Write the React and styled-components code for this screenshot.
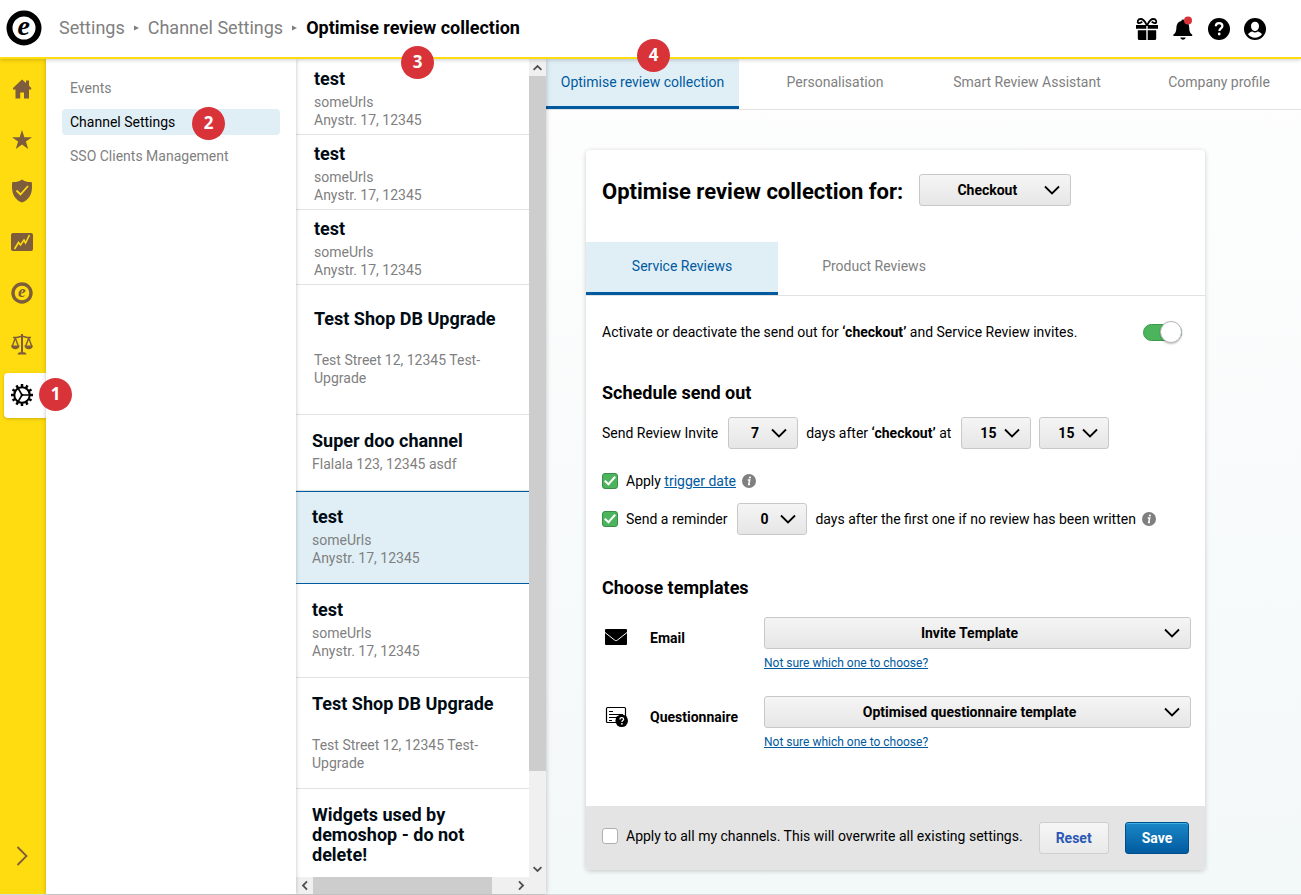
import React, { useState } from "react";
import styled, { createGlobalStyle, css } from "styled-components";

const colors = {
	yellow: "#ffdc0f",
	brown: "#7d5d3b",
	blue: "#005aa0",
	lightBlue: "#e0eff6",
	grey: "#7f7f7f",
	line: "#e2e2e2",
	red: "#d9333a",
	green: "#4cb45c",
};

const GlobalStyle = createGlobalStyle`
	*, *::before, *::after {
		box-sizing: border-box;
	}
	body {
		margin: 0;
		background: #fff;
		color: #000;
		font-family: Roboto, "Liberation Sans", sans-serif;
		font-size: 14px;
		line-height: 18px;
	}
	button, input, select {
		font: inherit;
		color: inherit;
		margin: 0;
	}
	h1, h2, h3, p, ul {
		margin: 0;
		padding: 0;
	}
	ul {
		list-style: none;
	}
	a {
		color: inherit;
		text-decoration: none;
	}
	svg {
		display: block;
		flex: none;
		overflow: visible;
	}
`;

const Shell = styled.div`
	position: relative;
	display: flex;
	flex-direction: column;
	height: 100vh;
	border-bottom: 1px solid #d8d8d8;
`;

const StyledHeader = styled.header`
	position: relative;
	z-index: 3;
	display: flex;
	align-items: center;
	flex: none;
	height: 59px;
	padding: 0 35px 2px 6px;
	background: #fff;
	border-bottom: 2px solid ${colors.yellow};
	box-shadow: 0 1px 4px rgba(0, 0, 0, 0.2);
`;

const Breadcrumb = styled.nav`
	display: flex;
	align-items: center;
	flex: 1;
	gap: 9px;
	margin-left: 17px;
	font-size: 18px;
	line-height: 24px;
	color: ${colors.grey};

	strong {
		font-weight: 700;
		color: #000;
	}
`;

const HeaderActions = styled.div`
	display: flex;
	align-items: center;
	gap: 14px;
	padding-top: 2px;
`;

const IconButton = styled.button`
	padding: 0;
	border: 0;
	background: none;
	cursor: pointer;
`;

const Columns = styled.div`
	display: flex;
	flex: 1;
	min-height: 0;
`;

const Rail = styled.nav`
	display: flex;
	flex-direction: column;
	justify-content: space-between;
	flex: none;
	width: 46px;
	padding: 5px 0 28px 4px;
	background: ${colors.yellow};
	color: ${colors.brown};
`;

const RailItem = styled.li`
	display: flex;
	align-items: center;
	height: 51px;

	a {
		display: flex;
		align-items: center;
		width: 100%;
		height: 45px;
		padding: 0 0 2px 7px;
		border-radius: 4px 0 0 4px;
		${({ $active }) =>
			$active &&
			css`
				background: #fff;
				color: #000;
				box-shadow: 0 1px 3px rgba(0, 0, 0, 0.2);
			`}
	}
`;

const ExpandButton = styled(IconButton)`
	margin-left: 12px;
	align-self: flex-start;
	color: ${colors.brown};
`;

const SubMenu = styled.nav`
	position: relative;
	z-index: 1;
	flex: none;
	width: 250px;
	padding: 16px;
	background: #fff;
	box-shadow: 0 0 4px rgba(0, 0, 0, 0.25);

	ul {
		display: flex;
		flex-direction: column;
		gap: 8px;
	}
`;

const SubMenuLink = styled.a`
	display: block;
	padding: 0 8px;
	line-height: 26px;
	border-radius: 4px;
	color: ${({ $active }) => ($active ? "#000" : colors.grey)};
	background: ${({ $active }) => ($active ? colors.lightBlue : "none")};
`;

const ChannelPane = styled.section`
	display: grid;
	grid-template-columns: 1fr 17px;
	grid-template-rows: minmax(0, 1fr) 17px;
	flex: none;
	position: relative;
	width: 250px;
	background: #fff;
	box-shadow: 0 0 5px rgba(0, 0, 0, 0.25);
`;

const ChannelList = styled.ul`
	overflow: hidden;
	padding-top: 1px;
`;

const channelSpacing = {
	tight: "9px 18px 5px",
	tall: "24px 18px 27px",
	normal: "16px 16px 17px",
	even: "16px",
};

const ChannelItem = styled.li`
	padding: ${({ $spacing }) => channelSpacing[$spacing]};
	border-bottom: 1px solid ${colors.line};
	color: ${colors.grey};
	cursor: pointer;

	h3 {
		margin-bottom: ${({ $wide }) => ($wide ? "22px" : "4px")};
		font-size: 18px;
		line-height: 20px;
		font-weight: 700;
		color: #000b14;
	}

	${({ $selected }) =>
		$selected &&
		css`
			padding: 15px 16px 16px;
			border-top: 1px solid ${colors.blue};
			border-bottom-color: ${colors.blue};
			background: ${colors.lightBlue};
		`}
`;

const ScrollTrack = styled.div`
	display: flex;
	flex-direction: ${({ $vertical }) => ($vertical ? "column" : "row")};
	background: #f0f0f0;
	color: #505050;
`;

const ScrollArrow = styled.button`
	display: flex;
	align-items: center;
	justify-content: center;
	flex: none;
	width: 17px;
	height: 17px;
	padding: 0;
	border: 0;
	background: none;
`;

const ScrollThumb = styled.div`
	flex: ${({ $share }) => $share};
	background: #cdcdcd;
`;

const ScrollRest = styled.div`
	flex: ${({ $share }) => $share};
`;

const ScrollCorner = styled.div`
	background: #f0f0f0;
`;

const Main = styled.main`
	flex: 1;
	min-width: 0;
	overflow: hidden auto;
	background: linear-gradient(#fefefe, #f3f8f9);
`;

const TabBar = styled.nav`
	display: flex;
	overflow: hidden;
	background: #fff;
	border-bottom: 1px solid ${colors.line};
`;

const Tab = styled.a`
	display: flex;
	align-items: center;
	justify-content: center;
	flex: none;
	width: 192px;
	height: 50px;
	padding: 0 0 2px;
	border: 0;
	border-bottom: 3px solid transparent;
	background: none;
	color: ${colors.grey};
	white-space: nowrap;
	cursor: pointer;

	${({ $active }) =>
		$active &&
		css`
			color: ${colors.blue};
			background: ${colors.lightBlue};
			border-bottom-color: ${colors.blue};
		`}
`;

const PageTab = styled(Tab)`
	&:first-child {
		width: 193px;
	}
`;

const CardTab = styled(Tab)`
	height: 53px;
`;

const Card = styled.form`
	max-width: 619px;
	margin: 40px 40px 24px;
	border-radius: 4px;
	background: #fff;
	box-shadow: 0 1px 5px rgba(0, 0, 0, 0.2);
`;

const CardHead = styled.div`
	display: flex;
	align-items: flex-start;
	gap: 16px;
	padding: 24px 16px 32px;

	h1 {
		font-size: 22px;
		line-height: 36px;
		font-weight: 700;
	}
`;

const CardBody = styled.div`
	padding: 24px 14px 56px 16px;
`;

const Row = styled.div`
	display: flex;
	align-items: center;
	min-height: 20px;
`;

const ToggleRow = styled(Row)`
	justify-content: space-between;
	min-height: 24px;
	padding-right: 9px;
`;

const SectionTitle = styled.h2`
	margin: 37px 0 ${({ $gap }) => $gap}px;
	font-size: 18px;
	line-height: 24px;
	font-weight: 700;
`;

const RowText = styled.label`
	padding: 0 10px 0 ${({ $after }) => ($after ? "8px" : "0")};
	white-space: nowrap;

	b {
		font-weight: 700;
	}

	& + svg {
		margin-left: -4px;
	}
`;

const Options = styled.div`
	display: flex;
	flex-direction: column;
	gap: 12px;
	margin: 22px 0 41px;

	& + ${SectionTitle} {
		margin-top: 0;
	}
`;

const TextLink = styled.a`
	color: ${colors.blue};
	text-decoration: underline;
`;

const SelectBox = styled.div`
	display: grid;
	align-items: center;
	flex: none;
	width: ${({ $width }) => $width || "100%"};

	& + & {
		margin-left: 8px;
	}

	select {
		grid-area: 1 / 1;
		appearance: none;
		width: 100%;
		height: 32px;
		padding: 0 24px 0 8px;
		border: 1px solid #c8c8c8;
		border-radius: 3px;
		background: linear-gradient(#f5f5f5, #e6e6e6);
		font-weight: 700;
		text-align-last: center;
		cursor: pointer;
	}

	svg {
		grid-area: 1 / 1;
		justify-self: end;
		margin-right: 11px;
		pointer-events: none;
	}
`;

const Checkbox = styled.input`
	appearance: none;
	flex: none;
	display: grid;
	place-items: center;
	width: 16px;
	height: 16px;
	margin-right: 8px;
	border: 1px solid #b0b0b0;
	border-radius: 3px;
	background: #fff;
	cursor: pointer;

	&:checked {
		border-color: #3a8f48;
		background: ${colors.green};
	}

	&:checked::after {
		content: "";
		width: 6px;
		height: 11px;
		margin-bottom: 3px;
		border: solid #fff;
		border-width: 0 2px 2px 0;
		transform: rotate(42deg);
	}
`;

const Toggle = styled.input`
	appearance: none;
	flex: none;
	display: flex;
	align-items: center;
	width: 39px;
	height: 17px;
	border: 1px solid #b0b0b0;
	border-radius: 9px;
	background: #ddd;
	cursor: pointer;

	&::after {
		content: "";
		flex: none;
		width: 22px;
		height: 22px;
		margin-left: -1px;
		border: 1px solid #b8b8b8;
		border-radius: 50%;
		background: #fff;
		box-shadow: 0 1px 2px rgba(0, 0, 0, 0.25);
	}

	&:checked {
		border-color: #3a9a4a;
		background: ${colors.green};
	}

	&:checked::after {
		margin-left: 16px;
	}
`;

const Templates = styled.div`
	display: flex;
	flex-direction: column;
	gap: 25px;
`;

const TemplateRow = styled.div`
	display: grid;
	grid-template-columns: 48px 114px 1fr;

	> svg {
		margin: 8px 0 0 3px;
	}

	label {
		line-height: 42px;
		font-weight: 700;
	}

	a {
		display: inline-block;
		margin-top: 6px;
		font-size: 12px;
		line-height: 16px;
	}
`;

const CardFooter = styled.footer`
	display: flex;
	align-items: flex-start;
	gap: 16px;
	padding: 16px;
	border-radius: 0 0 4px 4px;
	background: #e4e4e4;

	label {
		display: flex;
		align-items: center;
		flex: 1;
		height: 28px;
		white-space: nowrap;
	}
`;

const FooterButton = styled.button`
	height: 32px;
	padding: 0 16px;
	border: 1px solid ${({ $primary }) => ($primary ? "#004f8c" : "#cfcfcf")};
	border-radius: 3px;
	background: ${({ $primary }) =>
		$primary
			? "linear-gradient(#1b87c6, #005aa0)"
			: "linear-gradient(#f6f6f6, #e9e9e9)"};
	box-shadow: ${({ $primary }) =>
		$primary ? "inset 0 1px 0 #3fb0e4" : "none"};
	color: ${({ $primary }) => ($primary ? "#fff" : "#2b59b5")};
	font-weight: 700;
	cursor: pointer;
`;

const Badge = styled.span`
	position: absolute;
	z-index: 4;
	top: ${({ $top }) => $top}px;
	left: ${({ $left }) => $left}px;
	width: 33px;
	height: 33px;
	border-radius: 50%;
	background: ${colors.red};
	color: #fff;
	font: 700 17px/32px "Open Sans", sans-serif;
	text-align: center;
`;

const LogoMark = ({ size, ring }) => (
	<svg width={size} height={size} viewBox="0 0 36 36" aria-hidden="true">
		<circle
			cx="18"
			cy="18"
			r={17.5 - ring / 2}
			fill="none"
			stroke="currentColor"
			strokeWidth={ring}
		/>
		<text
			x="17.6"
			y="24.6"
			textAnchor="middle"
			fontFamily="'Liberation Serif', serif"
			fontStyle="italic"
			fontWeight="700"
			fontSize="28"
			fill="currentColor"
		>
			e
		</text>
	</svg>
);

const HomeIcon = () => (
	<svg width="22" height="22" viewBox="0 0 22 22" fill="currentColor">
		<path d="M11 1.5 15 5V2.5h3v5.3l2.2 2.1v1.6H18V20.500h-5v-6H9.200v6H4.500v-9H2V9.900z" />
	</svg>
);

const StarIcon = () => (
	<svg width="22" height="22" viewBox="0 0 22 22" fill="currentColor">
		<path d="M11 1l2.400 7.200H21l-6.100 4.400 2.300 7.400L11 15.500 4.800 20l2.300-7.400L1 8.200h7.600z" />
	</svg>
);

const ShieldIcon = () => (
	<svg width="22" height="24" viewBox="0 0 22 24">
		<path
			d="M11 .5c2.600 2 5.800 2.700 9.500 2.600.5.800.5 2.400.5 4.900 0 8-3.500 13-10 15.500C4.500 21 1 16 1 8c0-2.500 0-4.100.5-4.900C5.200 3.200 8.400 2.500 11 .5z"
			fill="currentColor"
		/>
		<path
			d="M5.500 11.500l4 4 7.500-8.500"
			fill="none"
			stroke={colors.yellow}
			strokeWidth="1.800"
		/>
	</svg>
);

const ChartIcon = () => (
	<svg width="22" height="18" viewBox="0 0 22 18">
		<rect width="22" height="18" rx="2" fill="currentColor" />
		<path
			d="M3.500 16 7.500 9.500l2 2.500 3.500-5 1.500 3L18.500 2"
			fill="none"
			stroke={colors.yellow}
			strokeWidth="1.600"
		/>
	</svg>
);

const ScalesIcon = () => (
	<svg
		width="22"
		height="22"
		viewBox="0 0 22 22"
		fill="none"
		stroke="currentColor"
		strokeWidth="1.400"
	>
		<path d="M11 1v18" strokeWidth="2" />
		<path d="M2 4.500h3.500C8 4.500 9 3.200 11 3.200s3 1.300 5.500 1.300H20" strokeWidth="1.600" />
		<path d="M4.300 5 1.300 13M4.300 5l3 8M17.700 5l-3 8M17.700 5l3 8" />
		<path
			d="M0 12.500h8.600c-.3 2.500-2 3.800-4.300 3.800S.3 15 0 12.500zM13.400 12.500H22c-.3 2.500-2 3.800-4.300 3.800s-4-1.300-4.300-3.800zM6.500 21.500c0-1.700 2-2.500 4.500-2.500s4.500.8 4.500 2.500z"
			fill="currentColor"
			stroke="none"
		/>
	</svg>
);

const GearIcon = () => (
	<svg
		width="22"
		height="22"
		viewBox="0 0 22 22"
		fill="none"
		stroke="currentColor"
	>
		<circle cx="11" cy="11" r="7.700" strokeWidth="2" />
		<g strokeWidth="2.500">
			{[...Array(12)].map((_, idx) => (
				<path
					key={idx}
					d="M11 0v3"
					transform={`rotate(${idx * 30} 11 11)`}
				/>
			))}
		</g>
		<path d="M18 11h-7L7.500 5M11 11l-3.500 6" strokeWidth="1.600" />
		<circle cx="11" cy="11" r="1.300" fill="currentColor" stroke="none" />
	</svg>
);

const GiftIcon = () => (
	<svg width="22" height="22" viewBox="0 0 22 22" fill="currentColor">
		<path d="M0 7h10.300v3.800H0zM11.700 7H22v3.800H11.700zM1.800 12.200h8.500V22H3.300a1.500 1.500 0 0 1-1.500-1.500zM11.700 12.200h8.500v8.300a1.500 1.500 0 0 1-1.500 1.500h-7z" />
		<path d="M9.800 6h2.400v2H9.800z" />
		<path
			d="M10.400 6.300C9 3.500 7.300 1 4.700 1 1.500 1 1 4.300 2.600 5.100c1.200.5 2.300-.5 3.700-1.300M11.600 6.300C13 3.500 14.700 1 17.300 1c3.200 0 3.700 3.300 2.100 4.100-1.200.5-2.300-.5-3.700-1.300"
			fill="none"
			stroke="currentColor"
			strokeWidth="1.800"
		/>
	</svg>
);

const BellIcon = () => (
	<svg width="22" height="24" viewBox="0 0 22 24">
		<path
			d="M11 2.500a1.600 1.600 0 0 1 1.600 1.400C16 4.600 17.100 7.200 17.200 10.300c.1 4.300.9 5.800 3 7.300V19H1.400v-1.400c2.100-1.500 2.900-3 3-7.300C4.500 7.200 6 4.600 9.400 3.900A1.600 1.600 0 0 1 11 2.500zM8.300 20.500h5.400c-.3 1.400-1.300 2.200-2.700 2.200s-2.400-.8-2.700-2.200z"
			fill="currentColor"
		/>
		<circle cx="16" cy="3.500" r="4" fill={colors.red} />
	</svg>
);

const HelpIcon = () => (
	<svg width="22" height="22" viewBox="0 0 22 22">
		<circle cx="11" cy="11" r="11" fill="currentColor" />
		<path
			d="M7.800 8.300c0-2 1.400-3.200 3.300-3.200s3.300 1.100 3.300 2.800c0 2.400-3 2.500-3 5"
			fill="none"
			stroke="#fff"
			strokeWidth="2.200"
		/>
		<circle cx="11.200" cy="16" r="1.400" fill="#fff" />
	</svg>
);

const UserIcon = () => (
	<svg width="22" height="22" viewBox="0 0 22 22">
		<circle cx="11" cy="11" r="11" fill="currentColor" />
		<path
			d="M11 3.800c2.500 0 4 1.700 4 4.200 0 2.700-1.600 5-4 5s-4-2.300-4-5c0-2.500 1.500-4.200 4-4.200zM4 16.300c1-1.800 2.700-2.500 4.300-2.900 1.600 1.300 3.800 1.300 5.400 0 1.600.4 3.300 1.100 4.300 2.900-1.700 2.200-4.200 3.500-7 3.500s-5.300-1.300-7-3.500z"
			fill="#fff"
		/>
	</svg>
);

const Chevron = ({
	direction = "down",
	width = 16,
	height = 10,
	stroke = 1.8,
}) => {
	const paths = {
		down: "M1 1.500l7 7 7-7",
		up: "M1 8.500l7-7 7 7",
		right: "M1.500 1l9 9-9 9",
		left: "M10.500 1l-9 9 9 9",
	};
	const sideways = direction === "left" || direction === "right";
	return (
		<svg
			width={width}
			height={height}
			viewBox={sideways ? "0 0 12 20" : "0 0 16 10"}
			fill="none"
			stroke="currentColor"
			strokeWidth={stroke}
		>
			<path d={paths[direction]} />
		</svg>
	);
};

const Separator = () => (
	<svg width="5" height="6" viewBox="0 0 5 6" fill="currentColor">
		<path d="M0 .5 5 3 0 5.500z" />
	</svg>
);

const InfoIcon = () => (
	<svg width="14" height="14" viewBox="0 0 14 14">
		<circle cx="7" cy="7" r="7" fill={colors.grey} />
		<circle cx="7.900" cy="3.500" r="1.100" fill="#fff" />
		<path
			d="M5.700 5.900h2L6.700 10.500h1.300"
			fill="none"
			stroke="#fff"
			strokeWidth="1.500"
		/>
	</svg>
);

const MailIcon = () => (
	<svg width="24" height="24" viewBox="0 0 24 24">
		<rect y="4" width="22" height="16" rx="1" fill="currentColor" />
		<path
			d="M0 7.500 9.500 15c1 .8 2 .8 3 0L22 7.500"
			fill="none"
			stroke="#fff"
			strokeWidth="1"
		/>
	</svg>
);

const QuestionnaireIcon = () => (
	<svg width="24" height="24" viewBox="0 0 24 24" fill="none">
		<rect
			x="1.500"
			y="3.500"
			width="19"
			height="15"
			rx="1"
			stroke="currentColor"
			strokeWidth="1.200"
		/>
		<path
			d="M4 7.500h4M4 10.500h14M4 13.500h9M4 16.500h3"
			stroke="currentColor"
		/>
		<circle cx="16.700" cy="16.800" r="6.300" fill="currentColor" />
		<path
			d="M14.900 15.400c0-1.200.8-1.800 1.800-1.800s1.900.6 1.900 1.600c0 1.300-1.700 1.400-1.700 2.700"
			stroke="#fff"
			strokeWidth="1.300"
		/>
		<circle cx="16.900" cy="19.800" r=".9" fill="#fff" />
	</svg>
);

const railItems = [
	{ label: "Home", icon: <HomeIcon /> },
	{ label: "Reviews", icon: <StarIcon /> },
	{ label: "Protection", icon: <ShieldIcon /> },
	{ label: "Statistics", icon: <ChartIcon /> },
	{ label: "Trustmark", icon: <LogoMark size={22} ring={5.5} /> },
	{ label: "Legal", icon: <ScalesIcon /> },
	{ label: "Settings", icon: <GearIcon />, active: true },
];

const subMenu = ["Events", "Channel Settings", "SSO Clients Management"];

const testLines = ["someUrls", "Anystr. 17, 12345"];

const channels = [
	{ title: "test", lines: testLines, spacing: "tight" },
	{ title: "test", lines: testLines, spacing: "tight" },
	{ title: "test", lines: testLines, spacing: "tight" },
	{
		title: "Test Shop DB Upgrade",
		lines: ["Test Street 12, 12345 Test-Upgrade"],
		spacing: "tall",
		wide: true,
	},
	{ title: "Super doo channel", lines: ["Flalala 123, 12345 asdf"] },
	{ title: "test", lines: testLines },
	{ title: "test", lines: testLines },
	{
		title: "Test Shop DB Upgrade",
		lines: ["Test Street 12, 12345 Test-Upgrade"],
		spacing: "even",
		wide: true,
	},
	{ title: "Widgets used by demoshop - do not delete!", lines: [] },
];

const pageTabs = [
	"Optimise review collection",
	"Personalisation",
	"Smart Review Assistant",
	"Company profile",
];

const cardTabs = ["Service Reviews", "Product Reviews"];

const badges = [
	{ top: 378, left: 39 },
	{ top: 107, left: 192 },
	{ top: 46, left: 401 },
	{ top: 39, left: 637 },
];

const Select = ({ id, label, width, options }) => (
	<SelectBox $width={width}>
		<select id={id} aria-label={label}>
			{options.map((option) => (
				<option key={option}>{option}</option>
			))}
		</select>
		<Chevron />
	</SelectBox>
);

const Header = () => (
	<StyledHeader>
		<LogoMark size={36} ring={6} />
		<Breadcrumb aria-label="Breadcrumb">
			<a href="#settings">Settings</a>
			<Separator />
			<a href="#channels">Channel Settings</a>
			<Separator />
			<strong>Optimise review collection</strong>
		</Breadcrumb>
		<HeaderActions>
			<IconButton aria-label="Rewards">
				<GiftIcon />
			</IconButton>
			<IconButton aria-label="Notifications">
				<BellIcon />
			</IconButton>
			<IconButton aria-label="Help">
				<HelpIcon />
			</IconButton>
			<IconButton aria-label="Account">
				<UserIcon />
			</IconButton>
		</HeaderActions>
	</StyledHeader>
);

const Channels = () => {
	const [selected, setSelected] = useState(5);

	return (
		<ChannelPane>
			<ChannelList>
				{channels.map((channel, idx) => (
					<ChannelItem
						key={idx}
						$spacing={channel.spacing || "normal"}
						$wide={channel.wide}
						$selected={idx === selected}
						onClick={() => setSelected(idx)}
					>
						<h3>{channel.title}</h3>
						{channel.lines.map((line) => (
							<p key={line}>{line}</p>
						))}
					</ChannelItem>
				))}
			</ChannelList>
			<ScrollTrack $vertical>
				<ScrollArrow aria-label="Scroll up">
					<Chevron direction="up" width={9} height={6} stroke={3} />
				</ScrollArrow>
				<ScrollThumb $share={695} />
				<ScrollRest $share={89} />
				<ScrollArrow aria-label="Scroll down">
					<Chevron width={9} height={6} stroke={3} />
				</ScrollArrow>
			</ScrollTrack>
			<ScrollTrack>
				<ScrollArrow aria-label="Scroll left">
					<Chevron direction="left" width={6} height={9} stroke={4} />
				</ScrollArrow>
				<ScrollThumb $share={9} />
				<ScrollRest $share={1} />
				<ScrollArrow aria-label="Scroll right">
					<Chevron direction="right" width={6} height={9} stroke={4} />
				</ScrollArrow>
			</ScrollTrack>
			<ScrollCorner />
		</ChannelPane>
	);
};

const ReviewSettings = () => {
	const [tab, setTab] = useState(0);

	return (
		<Card onSubmit={(e) => e.preventDefault()}>
			<CardHead>
				<h1>Optimise review collection for:</h1>
				<Select
					label="Optimise review collection for"
					width="152px"
					options={["Checkout"]}
				/>
			</CardHead>
			<TabBar>
				{cardTabs.map((name, idx) => (
					<CardTab
						key={name}
						as="button"
						type="button"
						$active={idx === tab}
						onClick={() => setTab(idx)}
					>
						{name}
					</CardTab>
				))}
			</TabBar>
			<CardBody>
				<ToggleRow>
					<RowText htmlFor="sendout">
						Activate or deactivate the send out for{" "}
						<b>‘checkout’</b> and Service Review invites.
					</RowText>
					<Toggle id="sendout" type="checkbox" defaultChecked />
				</ToggleRow>

				<SectionTitle $gap={12}>Schedule send out</SectionTitle>
				<Row>
					<RowText htmlFor="days">Send Review Invite</RowText>
					<Select id="days" width="70px" options={["7"]} />
					<RowText htmlFor="hour" $after>
						days after <b>‘checkout’</b> at
					</RowText>
					<Select id="hour" width="70px" options={["15"]} />
					<Select label="Minute" width="70px" options={["15"]} />
				</Row>
				<Options>
					<Row>
						<Checkbox id="trigger" type="checkbox" defaultChecked />
						<RowText htmlFor="trigger">
							Apply <TextLink href="#trigger">trigger date</TextLink>
						</RowText>
						<InfoIcon />
					</Row>
					<Row>
						<Checkbox id="reminder" type="checkbox" defaultChecked />
						<RowText htmlFor="reminder">Send a reminder</RowText>
						<Select
							id="reminderDays"
							width="70px"
							options={["0"]}
						/>
						<RowText htmlFor="reminderDays" $after>
							days after the first one if no review has been
							written
						</RowText>
						<InfoIcon />
					</Row>
				</Options>

				<SectionTitle $gap={17}>Choose templates</SectionTitle>
				<Templates>
					<TemplateRow>
						<MailIcon />
						<label htmlFor="email">Email</label>
						<div>
							<Select id="email" options={["Invite Template"]} />
							<TextLink href="#email-help">
								Not sure which one to choose?
							</TextLink>
						</div>
					</TemplateRow>
					<TemplateRow>
						<QuestionnaireIcon />
						<label htmlFor="questionnaire">Questionnaire</label>
						<div>
							<Select
								id="questionnaire"
								options={["Optimised questionnaire template"]}
							/>
							<TextLink href="#questionnaire-help">
								Not sure which one to choose?
							</TextLink>
						</div>
					</TemplateRow>
				</Templates>
			</CardBody>
			<CardFooter>
				<label>
					<Checkbox type="checkbox" />
					Apply to all my channels. This will overwrite all existing
					settings.
				</label>
				<FooterButton type="reset">Reset</FooterButton>
				<FooterButton type="submit" $primary>
					Save
				</FooterButton>
			</CardFooter>
		</Card>
	);
};

const App = () => (
	<>
		<GlobalStyle />
		<Shell>
			<Header />
			<Columns>
				<Rail>
					<ul>
						{railItems.map(({ label, icon, active }) => (
							<RailItem key={label} $active={active}>
								<a href={`#${label}`} aria-label={label}>
									{icon}
								</a>
							</RailItem>
						))}
					</ul>
					<ExpandButton aria-label="Expand menu">
						<Chevron direction="right" width={12} height={20} />
					</ExpandButton>
				</Rail>
				<SubMenu>
					<ul>
						{subMenu.map((name, idx) => (
							<li key={name}>
								<SubMenuLink href={`#menu-${idx}`} $active={idx === 1}>
									{name}
								</SubMenuLink>
							</li>
						))}
					</ul>
				</SubMenu>
				<Channels />
				<Main>
					<TabBar>
						{pageTabs.map((name, idx) => (
							<PageTab key={name} href={`#tab-${idx}`} $active={idx === 0}>
								{name}
							</PageTab>
						))}
					</TabBar>
					<ReviewSettings />
				</Main>
			</Columns>
			{badges.map((badge, idx) => (
				<Badge key={idx} $top={badge.top} $left={badge.left}>
					{idx + 1}
				</Badge>
			))}
		</Shell>
	</>
);

export default App;
